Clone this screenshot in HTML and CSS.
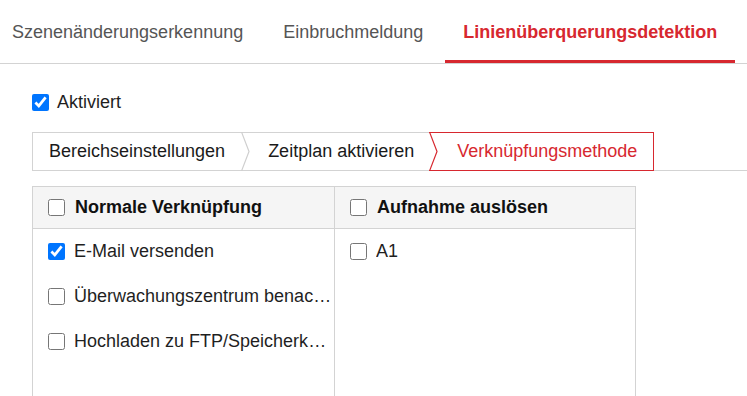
FILE: index.html
```html
<!DOCTYPE html>
<html lang="de">
<head>
<meta charset="utf-8">
<title>Linienüberquerungsdetektion</title>
<link rel="stylesheet" href="styles.css">
</head>
<body>
<nav class="tabs">
  <div class="tab tab-first">Szenenänderungserkennung</div>
  <div class="tab">Einbruchmeldung</div>
  <div class="tab tab-active">Linienüberquerungsdetektion</div>
</nav>
<main class="content">
  <label class="enable">
    <input type="checkbox" class="cb" checked>
    <span>Aktiviert</span>
  </label>
  <div class="steps">
    <div class="step step-first">Bereichseinstellungen</div>
    <div class="step step-mid">
      <svg class="chev" viewBox="0 0 9 39" width="9" height="39"><polyline points="0.5,0 8,19.5 0.5,39" fill="none" stroke="#cfcfcf" stroke-width="1.2"/></svg>
      Zeitplan aktivieren
    </div>
    <div class="step step-active">
      <svg class="chev" viewBox="0 0 9 39" width="9" height="39"><polyline points="0.5,0 8,19.5 0.5,39" fill="none" stroke="#d7282f" stroke-width="1.2"/></svg>
      Verknüpfungsmethode
    </div>
  </div>
  <div class="grid">
    <div class="col">
      <div class="head"><label class="item"><input type="checkbox" class="cb"><span class="label">Normale Verknüpfung</span></label></div>
      <div class="body">
        <label class="item row"><input type="checkbox" class="cb" checked><span class="label">E-Mail versenden</span></label>
        <label class="item row"><input type="checkbox" class="cb"><span class="label">Überwachungszentrum benachrichtigen</span></label>
        <label class="item row"><input type="checkbox" class="cb"><span class="label">Hochladen zu FTP/Speicherkarte/NAS</span></label>
      </div>
    </div>
    <div class="col col-second">
      <div class="head"><label class="item"><input type="checkbox" class="cb"><span class="label">Aufnahme auslösen</span></label></div>
      <div class="body">
        <label class="item row"><input type="checkbox" class="cb"><span class="label">A1</span></label>
      </div>
    </div>
  </div>
</main>
</body>
</html>
```

FILE: styles.css
```css
html, body {
  margin: 0;
  padding: 0;
  background: #ffffff;
}
body {
  font-family: "Liberation Sans", Arial, sans-serif;
  font-size: 18px;
  color: #1f1f1f;
  overflow: hidden;
}
.tabs {
  display: flex;
  gap: 4px;
  height: 63px;
  border-bottom: 1px solid #d3d3d3;
}
.tab {
  display: flex;
  align-items: center;
  box-sizing: border-box;
  height: 63px;
  padding: 5px 18px 0;
  border-bottom: 3px solid transparent;
  color: #555555;
  white-space: nowrap;
}
.tab-first {
  padding-left: 12px;
}
.tab-active {
  color: #d7282f;
  font-weight: bold;
  border-bottom-color: #d7282f;
}
.content {
  padding-left: 32px;
}
.enable {
  display: flex;
  align-items: center;
  gap: 8px;
  margin-top: 27px;
  height: 22px;
}
.cb {
  width: 17px;
  height: 17px;
  margin: 0;
  flex: none;
  accent-color: #0075ff;
}
.steps {
  display: flex;
  align-items: flex-start;
  margin-top: 19px;
  border-bottom: 1px solid #d3d3d3;
}
.step {
  position: relative;
  box-sizing: border-box;
  height: 38px;
  display: flex;
  align-items: center;
  padding: 0 16px 0 28px;
  border-top: 1px solid #d3d3d3;
  white-space: nowrap;
  color: #1a1a1a;
}
.step-first {
  padding-left: 16px;
  border-left: 1px solid #d3d3d3;
}
.step-mid {
  padding: 0 15px 0 27px;
}
.step-active {
  height: 39px;
  margin-bottom: -1px;
  border-top-color: #d7282f;
  border-right: 1px solid #d7282f;
  border-bottom: 1px solid #d7282f;
  color: #d7282f;
}
.chev {
  position: absolute;
  left: 0;
  top: -1px;
}
.grid {
  display: grid;
  grid-template-columns: 301px 301px;
  width: 604px;
  box-sizing: border-box;
  margin-top: 15px;
  border: 1px solid #d3d3d3;
}
.col {
  min-width: 0;
}
.col-second {
  border-left: 1px solid #d3d3d3;
}
.head {
  height: 41px;
  border-bottom: 1px solid #d3d3d3;
  background: #f5f5f5;
  display: flex;
  align-items: center;
  padding-left: 15px;
  font-weight: bold;
  color: #111111;
}
.body {
  padding: 0 0 0 15px;
  min-height: 200px;
}
.item {
  display: flex;
  align-items: center;
  gap: 9px;
  min-width: 0;
}
.head .item {
  gap: 10px;
}
.row {
  height: 45px;
}
.label {
  white-space: nowrap;
  overflow: hidden;
  text-overflow: ellipsis;
  min-width: 0;
}
```
